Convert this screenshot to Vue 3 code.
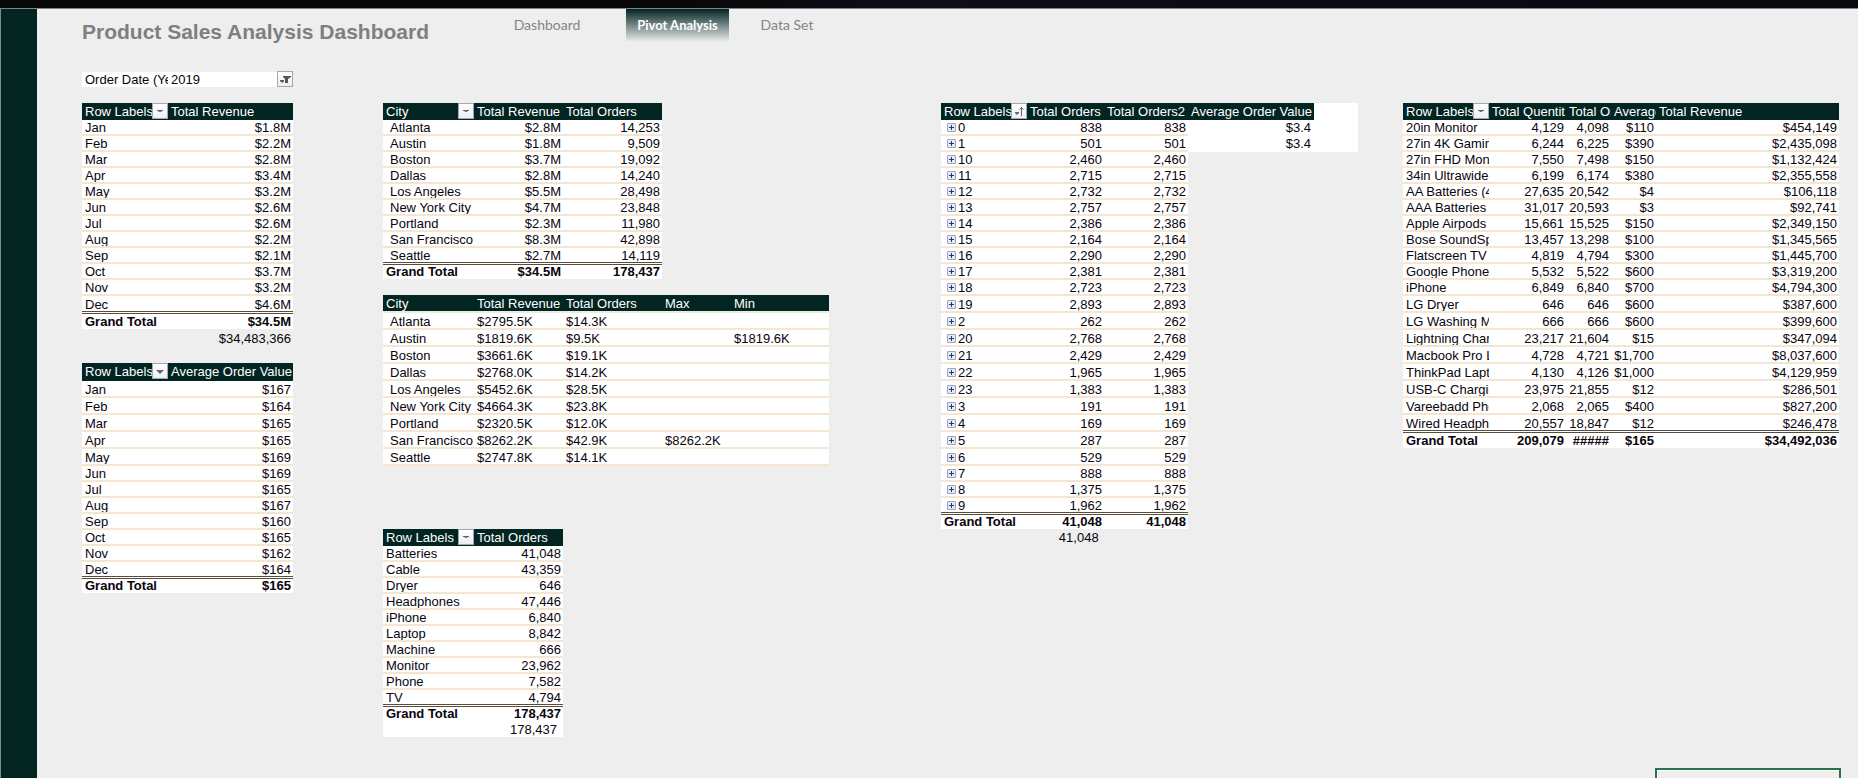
<script setup>
const months = ['Jan', 'Feb', 'Mar', 'Apr', 'May', 'Jun', 'Jul', 'Aug', 'Sep', 'Oct', 'Nov', 'Dec']
const zip = (names, ...lists) => names.map((n, i) => [n, ...lists.map((l) => l[i])])

const cities = ['Atlanta', 'Austin', 'Boston', 'Dallas', 'Los Angeles', 'New York City', 'Portland', 'San Francisco', 'Seattle']

// tall: [first, last] indexes of the rows that are one pixel taller
const revenueByMonth = {
  name: 'Revenue by month', area: 'month', cols: [86, 125], head: ['Row Labels', 'Total Revenue'], icon: 'drop', tall: [11, 12],
  rows: zip(months, ['$1.8M', '$2.2M', '$2.8M', '$3.4M', '$3.2M', '$2.6M', '$2.6M', '$2.2M', '$2.1M', '$3.7M', '$3.2M', '$4.6M']),
  total: ['Grand Total', '$34.5M']
}
const valueByMonth = {
  name: 'Average order value by month', area: 'month', cols: [86, 125], head: ['Row Labels', 'Average Order Value'], icon: 'drop', tall: [0, 4], tallHead: true,
  rows: zip(months, ['$167', '$164', '$165', '$165', '$169', '$169', '$165', '$167', '$160', '$165', '$162', '$164']),
  total: ['Grand Total', '$165']
}
const cityTotals = {
  name: 'Totals by city', area: 'city', cols: [91, 89, 99], head: ['City', 'Total Revenue', 'Total Orders'], icon: 'drop', tall: [99, 99], indent: true,
  rows: zip(cities,
    ['$2.8M', '$1.8M', '$3.7M', '$2.8M', '$5.5M', '$4.7M', '$2.3M', '$8.3M', '$2.7M'],
    ['14,253', '9,509', '19,092', '14,240', '28,498', '23,848', '11,980', '42,898', '14,119']),
  total: ['Grand Total', '$34.5M', '178,437']
}
const cityRange = {
  name: 'City maximum and minimum', area: 'range', cols: [91, 89, 99, 69, 98], head: ['City', 'Total Revenue', 'Total Orders', 'Max', 'Min'], tall: [0, 8], tallHead: true, indent: true, left: true,
  rows: zip(cities,
    ['$2795.5K', '$1819.6K', '$3661.6K', '$2768.0K', '$5452.6K', '$4664.3K', '$2320.5K', '$8262.2K', '$2747.8K'],
    ['$14.3K', '$9.5K', '$19.1K', '$14.2K', '$28.5K', '$23.8K', '$12.0K', '$42.9K', '$14.1K'],
    ['', '', '', '', '', '', '', '$8262.2K', ''],
    ['', '$1819.6K', '', '', '', '', '', '', ''])
}
const categories = {
  name: 'Orders by category', area: 'category', cols: [91, 89], head: ['Row Labels', 'Total Orders'], icon: 'drop', tall: [99, 99],
  rows: zip(['Batteries', 'Cable', 'Dryer', 'Headphones', 'iPhone', 'Laptop', 'Machine', 'Monitor', 'Phone', 'TV'],
    ['41,048', '43,359', '646', '47,446', '6,840', '8,842', '666', '23,962', '7,582', '4,794']),
  total: ['Grand Total', '178,437']
}
const hourOrders = [
  ['0', '838'], ['1', '501'], ['10', '2,460'], ['11', '2,715'], ['12', '2,732'], ['13', '2,757'], ['14', '2,386'], ['15', '2,164'],
  ['16', '2,290'], ['17', '2,381'], ['18', '2,723'], ['19', '2,893'], ['2', '262'], ['20', '2,768'], ['21', '2,429'], ['22', '1,965'],
  ['23', '1,383'], ['3', '191'], ['4', '169'], ['5', '287'], ['6', '529'], ['7', '888'], ['8', '1,375'], ['9', '1,962']
]
const hours = {
  name: 'Orders by hour', area: 'hour', cols: [86, 77, 84, 126, 44], head: ['Row Labels', 'Total Orders', 'Total Orders2', 'Average Order Value', ''], icon: 'sort', tall: [11, 20], expand: true, core: 3,
  rows: hourOrders.map(([h, n], i) => (i < 2 ? [h, n, n, '$3.4', ''] : [h, n, n])),
  total: ['Grand Total', '41,048', '41,048']
}
const products = {
  name: 'Product totals', area: 'product', cols: [86, 77, 45, 45, 183], head: ['Row Labels', 'Total Quentit', 'Total Orders', 'Average Order Value', 'Total Revenue'], icon: 'drop', tall: [11, 19],
  rows: [
    ['20in Monitor', '4,129', '4,098', '$110', '$454,149'],
    ['27in 4K Gaming Monitor', '6,244', '6,225', '$390', '$2,435,098'],
    ['27in FHD Monitor', '7,550', '7,498', '$150', '$1,132,424'],
    ['34in Ultrawide Monitor', '6,199', '6,174', '$380', '$2,355,558'],
    ['AA Batteries (4-pack)', '27,635', '20,542', '$4', '$106,118'],
    ['AAA Batteries (4-pack)', '31,017', '20,593', '$3', '$92,741'],
    ['Apple Airpods Headphones', '15,661', '15,525', '$150', '$2,349,150'],
    ['Bose SoundSport Headphones', '13,457', '13,298', '$100', '$1,345,565'],
    ['Flatscreen TV', '4,819', '4,794', '$300', '$1,445,700'],
    ['Google Phone', '5,532', '5,522', '$600', '$3,319,200'],
    ['iPhone', '6,849', '6,840', '$700', '$4,794,300'],
    ['LG Dryer', '646', '646', '$600', '$387,600'],
    ['LG Washing Machine', '666', '666', '$600', '$399,600'],
    ['Lightning Charging Cable', '23,217', '21,604', '$15', '$347,094'],
    ['Macbook Pro Laptop', '4,728', '4,721', '$1,700', '$8,037,600'],
    ['ThinkPad Laptop', '4,130', '4,126', '$1,000', '$4,129,959'],
    ['USB-C Charging Cable', '23,975', '21,855', '$12', '$286,501'],
    ['Vareebadd Phone', '2,068', '2,065', '$400', '$827,200'],
    ['Wired Headphones', '20,557', '18,847', '$12', '$246,478']
  ],
  total: ['Grand Total', '209,079', '#####', '$165', '$34,492,036']
}

const groups = [
  { key: 'a', filter: true, tables: [{ ...revenueByMonth, note: '$34,483,366' }, valueByMonth] },
  { key: 'b', tables: [cityTotals, cityRange, { ...categories, note: '178,437' }] },
  { key: 'c', tables: [{ ...hours, note: '41,048' }] },
  { key: 'd', selection: true, tables: [products] }
]
const isTall = (t, i) => i >= t.tall[0] && i <= t.tall[1]
const widthOf = (t) => t.cols.reduce((a, b) => a + b, 0)
</script>

<template>
  <div class="page">
    <div class="topbar"></div>
    <div class="body">
      <aside class="rail"></aside>
      <main class="content">
        <header class="header">
          <h1>Product Sales Analysis Dashboard</h1>
          <nav>
            <a href="#dashboard">Dashboard</a>
            <a href="#pivot" class="active" aria-current="page">Pivot Analysis</a>
            <a href="#data">Data Set</a>
          </nav>
        </header>
        <div class="sheet">
          <section v-for="g in groups" :key="g.key" class="group" :class="'group-' + g.key">
            <div v-if="g.filter" class="filter">
              <span class="filter-name" id="year-label">Order Date (Year)</span>
              <span class="filter-value">2019</span>
              <button type="button" class="drop" aria-labelledby="year-label">
                <svg viewBox="0 0 14 14" width="14" height="14"><path d="M2 8h4v1L4.500 11 2 9z M5 4h8v1l-3 2v4H7V7L5 5z" fill="#555" /></svg>
              </button>
            </div>
            <div v-for="t in g.tables" :key="t.name" class="block" :class="t.area">
              <table :aria-label="t.name" :class="{ indent: t.indent, left: t.left }">
                <colgroup>
                  <col v-for="(w, i) in t.cols" :key="i" :style="{ width: (w / widthOf(t)) * 100 + '%' }" />
                </colgroup>
                <thead>
                  <tr :class="{ tall: t.tallHead }">
                    <th v-for="(h, i) in t.head" :key="i" scope="col" :class="{ blank: !h }">
                      <div class="head">
                        <span>{{ h }}</span>
                        <button v-if="i === 0 && t.icon" type="button" class="drop" :aria-label="'Filter ' + t.name">
                          <svg v-if="t.icon === 'sort'" viewBox="0 0 14 14" width="14" height="14">
                            <path d="M3 8h4v1L5 11 3 9z" fill="#666" />
                            <path d="M9.500 12V3M7.500 5.500l2-2 2 2" fill="none" stroke="#666" />
                          </svg>
                          <svg v-else viewBox="0 0 14 14" width="14" height="14">
                            <path :d="t.name === valueByMonth.name ? 'M3 6h8L7 10z' : 'M4 6h6v1H9L7.500 8h-1L5 7H4z'" fill="#666" />
                          </svg>
                        </button>
                      </div>
                    </th>
                  </tr>
                </thead>
                <tbody>
                  <tr v-for="(r, ri) in t.rows" :key="ri" :class="{ tall: isTall(t, ri), last: t.total && ri === t.rows.length - 1 }">
                    <td v-for="(c, ci) in r" :key="ci" :class="{ extra: t.core && ci >= t.core }">
                      <button v-if="t.expand && ci === 0" type="button" class="plus" :aria-label="'Expand ' + c">
                        <svg viewBox="0 0 9 9" width="9" height="9"><path d="M2 4.500h5M4.500 2v5" stroke="#26376b" fill="none" /></svg>
                      </button>{{ c }}
                    </td>
                  </tr>
                </tbody>
                <tfoot v-if="t.total">
                  <tr :class="{ tall: isTall(t, t.rows.length) }">
                    <td v-for="(c, ci) in t.total" :key="ci">{{ c }}</td>
                  </tr>
                </tfoot>
              </table>
              <div v-if="t.note" class="note">{{ t.note }}</div>
            </div>
            <div v-if="g.selection" class="selection"></div>
          </section>
        </div>
      </main>
    </div>
  </div>
</template>

<style>
body {
  margin: 0;
  background: #eeeeee;
}
</style>

<style scoped>
.page {
  min-height: 100vh;
  display: flex;
  flex-direction: column;
  background: #eeeeee;
  color: #08040c;
  font-family: "Liberation Sans", Arial, sans-serif;
  font-size: 13px;
  line-height: 13px;
}
.topbar {
  height: 8px;
  background: linear-gradient(90deg, #080808 0%, #080808 35%, #0d0e16 50%, #08090c 100%);
  border-bottom: 1px solid #858585;
}
.body {
  flex: 1;
  display: flex;
}
.rail {
  flex: none;
  box-sizing: border-box;
  width: 37px;
  background: #022522;
  border-left: 1px solid #7d8b89;
}
.content {
  flex: 1;
  min-width: 0;
  display: flex;
  flex-direction: column;
}
.header {
  display: grid;
  grid-template-columns: 386fr 1390fr;
  height: 62px;
  padding-left: 45px;
}
h1 {
  margin: 0;
  padding-top: 11px;
  font-size: 21px;
  line-height: 24px;
  color: #7f7f7f;
  white-space: nowrap;
}
nav {
  display: grid;
  grid-template-columns: 158px 103px 116px;
  height: 33px;
}
nav a {
  font-family: Lato, sans-serif;
  font-size: 14px;
  line-height: 32px;
  text-align: center;
  color: #858585;
  text-decoration: none;
  white-space: nowrap;
}
nav a.active {
  font-size: 13px;
  font-weight: 700;
  color: #fff;
  background: linear-gradient(#022522, #eeeeee);
}
.sheet {
  flex: 1;
  display: grid;
  grid-template-columns: 45fr 211fr 90fr 446fr 112fr 417fr 45fr 436fr 19fr;
}
.group {
  display: flex;
  flex-direction: column;
  min-width: 0;
  padding-top: 32px;
}
.group-a {
  grid-column: 2;
  padding-top: 0;
  gap: 16px;
}
.group-b { grid-column: 4; }
.group-c { grid-column: 6; }
.group-d { grid-column: 8; }
.filter {
  display: grid;
  grid-template-columns: 86fr 109fr 16px;
  height: 16px;
  line-height: 17px;
  background: linear-gradient(#eeeeee 1px, #fff 1px);
}
.filter-name,
.filter-value {
  padding-left: 3px;
  overflow: hidden;
  white-space: nowrap;
}
table {
  width: 100%;
  table-layout: fixed;
  border-collapse: separate;
  border-spacing: 0;
}
.city {
  display: grid;
  grid-template-columns: 279fr 167fr;
}
.category {
  display: grid;
  grid-template-columns: 180fr 266fr;
}
th,
td {
  box-sizing: border-box;
  padding: 0;
  overflow: hidden;
  white-space: nowrap;
  vertical-align: bottom;
}
th {
  height: 17px;
  background: #022522;
  color: #fff;
  font-weight: 400;
  text-align: left;
  vertical-align: top;
}
.tall th {
  height: 18px;
}
th.blank {
  background: #fff;
}
.range th {
  border-bottom: 2px solid #e9efdf;
}
.head {
  display: flex;
  height: 16px;
  line-height: 17px;
}
.tall .head {
  line-height: 18px;
}
.head span {
  flex: 1;
  min-width: 0;
  padding-left: 3px;
  overflow: hidden;
}
.drop {
  flex: none;
  box-sizing: border-box;
  width: 16px;
  height: 16px;
  padding: 0;
  border: 1px solid #a3a8b0;
  background: linear-gradient(#fff, #eceef4);
}
svg {
  display: block;
}
td {
  height: 16px;
  padding: 0 2px 0 3px;
  background: #fff;
  border-bottom: 2px solid #f5e6d0;
  text-align: right;
}
td:first-child {
  padding-right: 0;
  text-align: left;
}
.tall td {
  height: 17px;
}
.last td {
  height: 17px;
  border-bottom: 3px double #5a4c3c;
}
.last.tall td {
  height: 18px;
}
.indent tbody td:first-child {
  padding-left: 7px;
}
.left td {
  text-align: left;
}
td.extra {
  border-bottom-color: #fff;
}
td.extra:nth-child(4) {
  padding-right: 3px;
}
tfoot td {
  height: 14px;
  border-bottom: 0;
  font-weight: 700;
  line-height: 14px;
}
tfoot .tall td {
  height: 15px;
}
.hour tbody td:first-child {
  padding-left: 6px;
}
.plus {
  display: inline-block;
  box-sizing: border-box;
  width: 9px;
  height: 9px;
  margin: 0 2px 0 0;
  padding: 0;
  border: 0;
  border-radius: 1px;
  outline: 1px solid #9aa7c0;
  outline-offset: -1px;
  background: #e4eaf4;
}
.note {
  box-sizing: border-box;
  height: 18px;
  padding-right: 2px;
  line-height: 19px;
  text-align: right;
}
.hour .note {
  width: 39%;
  height: 16px;
  padding-right: 5px;
  line-height: 17px;
}
.category .note {
  grid-column: 1;
  height: 16px;
  padding-right: 6px;
  line-height: 17px;
  background: #fff;
}
.range {
  margin-top: 16px;
}
.category {
  margin-top: 63px;
}
.selection {
  box-sizing: border-box;
  align-self: flex-end;
  width: 186px;
  height: 10px;
  margin: auto -2px 0 0;
  border: 2px solid #2c704c;
  border-bottom: 0;
  box-shadow: inset 0 1px 0 #fff, inset 1px 0 0 #fff;
}
</style>
